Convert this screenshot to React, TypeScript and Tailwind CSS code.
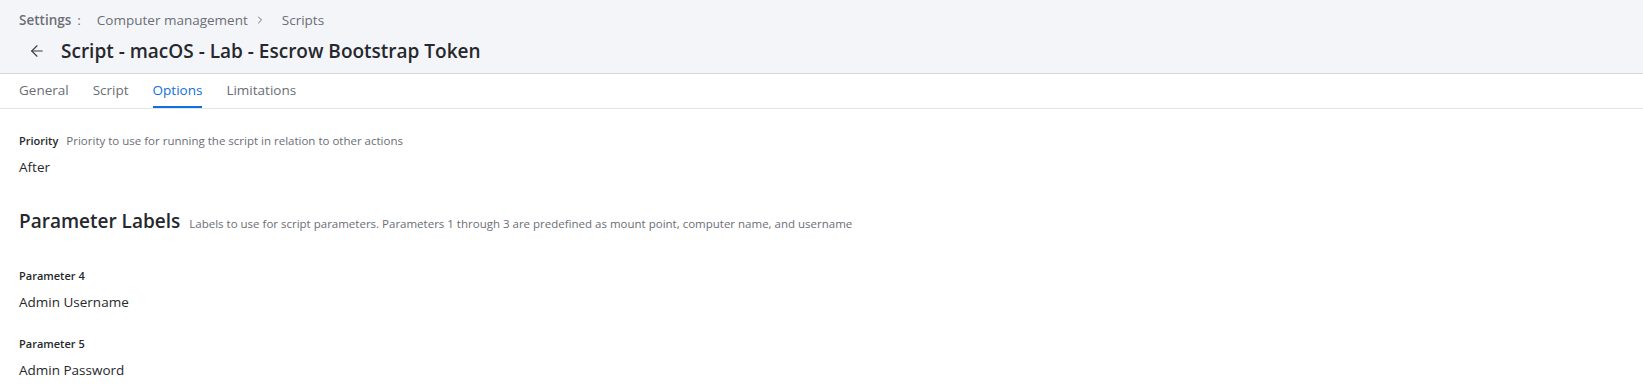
import { ArrowLeft, ChevronRight } from "lucide-react";

const tabs = ["General", "Script", "Options", "Limitations"];

const params = [
  { label: "Parameter 4", value: "Admin Username" },
  { label: "Parameter 5", value: "Admin Password" },
];

export default function App() {
  return (
    <div className="min-h-screen bg-white text-[#26282d] font-['Open_Sans','Liberation_Sans',sans-serif]">
      {/* Header */}
      <header className="bg-[#f4f5f9] border-b border-[#d6d7db] h-[74px] px-[19px] pt-[10px]">
        <div className="flex items-center text-[13.5px] leading-[20px] text-[#6b6e76]">
          <span className="font-semibold">Settings</span>
          <span className="ml-[6px] mr-[16px]">:</span>
          <span>Computer management</span>
          <ChevronRight size={12} strokeWidth={2} className="ml-[6px] mr-[16px] text-[#6b6e76]" />
          <span>Scripts</span>
        </div>
        <div className="flex items-center mt-[8px]">
          <button className="ml-[8px] w-[20px] h-[20px] flex items-center justify-center text-[#3b3d43]">
            <ArrowLeft size={18} strokeWidth={1.5} />
          </button>
          <h1 className="ml-[14px] text-[19px] leading-[26px] font-semibold">
            Script - macOS - Lab - Escrow Bootstrap Token
          </h1>
        </div>
      </header>

      {/* Tabs */}
      <nav className="flex gap-[24px] px-[19px] h-[35px] border-b border-[#e3e4e7]">
        {tabs.map(t => (
          <button
            key={t}
            className={`text-[13.5px] h-full flex items-center border-b-2 ${
              t === "Options" ? "text-[#0f6fde] border-[#0f6fde]" : "text-[#6b6e76] border-transparent"
            }`}
          >
            {t}
          </button>
        ))}
      </nav>

      <main className="px-[19px] pt-[23px]">
        <div className="flex items-baseline gap-[8px]">
          <span className="text-[11px] font-semibold">Priority</span>
          <span className="text-[11.5px] text-[#6b6e76]">Priority to use for running the script in relation to other actions</span>
        </div>
        <p className="text-[13.5px] mt-[7px]">After</p>

        <div className="flex items-baseline gap-[9px] mt-[30px]">
          <h2 className="text-[19px] font-semibold">Parameter Labels</h2>
          <span className="text-[11.5px] text-[#6b6e76]">
            Labels to use for script parameters. Parameters 1 through 3 are predefined as mount point, computer name, and username
          </span>
        </div>

        <div className="mt-[33px] flex flex-col gap-[24px]">
          {params.map(p => (
            <div key={p.label}>
              <p className="text-[11px] font-semibold">{p.label}</p>
              <p className="text-[13.5px] mt-[7px]">{p.value}</p>
            </div>
          ))}
        </div>
      </main>
    </div>
  );
}
